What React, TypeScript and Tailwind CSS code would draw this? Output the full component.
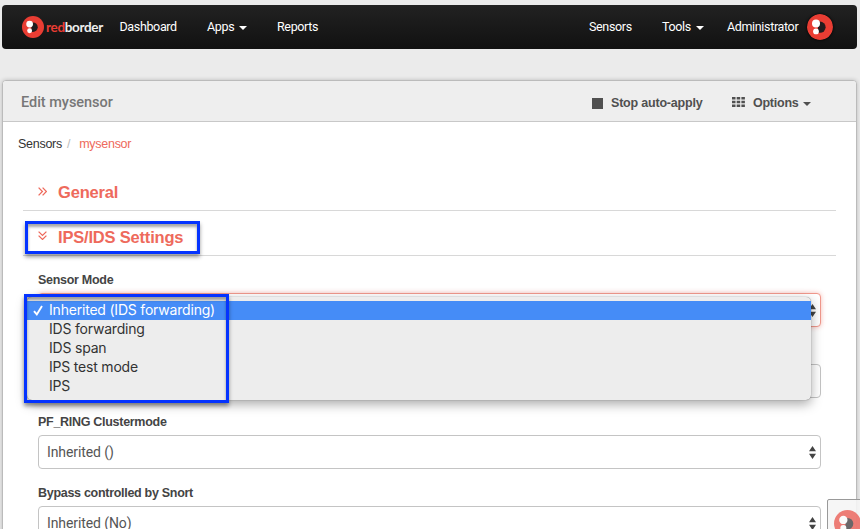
import React from 'react';

function Mark({ className }: { className: string }) {
  return (
    <svg viewBox="0 0 26 26" className={className}>
      <circle cx="13" cy="13" r="13" fill="#e93d33" />
      <path d="M11 7.6h2a5.6 5.6 0 0 1 0 11.2h-2z" fill="#211c1e" />
      <circle cx="9" cy="9.6" r="4" fill="#fff" />
      <circle cx="9" cy="17.4" r="2.9" fill="#fff" />
    </svg>
  );
}

function Caret({ className }: { className: string }) {
  return (
    <svg viewBox="0 0 8 4" className={`h-1 w-2 ${className}`}>
      <path d="M0 0h8L4 4z" fill="currentColor" />
    </svg>
  );
}

function Arrows() {
  return (
    <svg viewBox="0 0 7 13" className="h-[13px] w-[7px] shrink-0 text-[#444]">
      <path d="M0 5.2 3.5 0 7 5.2zM0 7.8h7L3.5 13z" fill="currentColor" />
    </svg>
  );
}

function Chevrons({ down }: { down?: boolean }) {
  return (
    <svg
      viewBox="0 0 9 9"
      className={`h-[9px] w-[9px] ${down ? '-mt-1 rotate-90' : '-mt-0.5'}`}
      fill="none"
      stroke="#ee6a5c"
      strokeWidth="1.3"
    >
      <path d="M.6.6 4.4 4.5.6 8.4M4.6.6l3.8 3.9-3.8 3.9" />
    </svg>
  );
}

function Section({ title, down }: { title: string; down?: boolean }) {
  return (
    <div className="flex h-[45px] items-center border-b border-[#d8d8d8] pt-2 pl-[15px]">
      <Chevrons down={down} />
      <h2 className="ml-[11px] font-['Liberation_Sans',sans-serif] text-[16.5px] font-bold tracking-[-0.19px] text-[#ee6a5c]">
        {title}
      </h2>
    </div>
  );
}

function Field({ label, value, focus, plain }: { label: string; value: string; focus?: boolean; plain?: boolean }) {
  return (
    <div className="h-[71px]">
      <div className="flex h-[26px] items-center font-['Liberation_Sans',sans-serif] text-[12.5px] font-bold tracking-[-0.29px] text-[#444]">
        {label}
      </div>
      <div
        className={`flex h-[34px] w-[783px] items-center justify-between rounded-[4px] border bg-white pr-1 pl-2 text-[14px] tracking-[-0.1px] text-[#555] ${
          focus ? 'border-[#f0988c] shadow-[0_0_5px_rgba(238,106,92,0.45)]' : 'border-[#c4c4c4]'
        }`}
      >
        <span>{value}</span>
        {!plain && <Arrows />}
      </div>
    </div>
  );
}

const modes = ['Inherited (IDS forwarding)', 'IDS forwarding', 'IDS span', 'IPS test mode', 'IPS'];

export default function App() {
  return (
    <div className="relative h-[529px] w-[860px] overflow-hidden bg-[#ebebeb] pt-[5px] pl-[2px] font-[Roboto,sans-serif]">
      <nav className="flex h-11 w-[855px] items-center rounded-[4px] bg-linear-to-b from-[#222] to-[#111] pl-5 text-[12.5px] tracking-[-0.35px] whitespace-nowrap text-white">
        <div className="flex w-[97px] items-center">
          <Mark className="h-[22px] w-[22px]" />
          <span className="ml-[2px] font-[Lato,sans-serif] text-[13.5px] leading-4 font-bold tracking-[-0.33px] text-[#eee]">
            <span className="text-[#e93d33]">red</span>border
          </span>
        </div>
        <span className="w-[88px] pl-[0.5px]">Dashboard</span>
        <span className="flex w-[70px] items-center">
          Apps <Caret className="mt-px ml-[5px]" />
        </span>
        <span className="w-[312px]">Reports</span>
        <span className="w-[73px]">Sensors</span>
        <span className="flex w-[65px] items-center">
          Tools <Caret className="mt-px ml-[5px]" />
        </span>
        <span className="w-20">Administrator</span>
        <Mark className="h-[26px] w-[26px] rounded-full shadow-[0_0_3px_#000]" />
      </nav>

      <main className="mt-[31px] h-[470px] w-[855px] rounded-t-[4px] border border-[#bbb] bg-white shadow-[0_0_4px_rgba(0,0,0,0.2)]">
        <header className="flex h-[41px] items-center rounded-t-[3px] border-b border-[#c8c8c8] bg-[#eee] pl-[18px] font-['Liberation_Sans',sans-serif] font-bold whitespace-nowrap text-[#505050]">
          <h1 className="w-[571px] pt-[3px] font-[Roboto,sans-serif] text-[14.5px] font-medium tracking-[-0.03px] text-[#777]">
            Edit mysensor
          </h1>
          <div className="flex w-[140px] items-center pt-1 text-[12.5px] tracking-[-0.2px]">
            <span className="mr-2 h-[11px] w-[11px] bg-[#505050]" />
            Stop auto-apply
          </div>
          <div className="flex items-center pt-1 text-[12.5px] tracking-[-0.25px]">
            <svg viewBox="0 0 13 10" className="-mt-0.5 mr-2 h-[10px] w-[13px]" fill="#505050">
              <path d="M0 0h3.5v2.6H0zM4.7 0h3.5v2.6H4.7zM9.4 0h3.5v2.6H9.4zM0 3.7h3.5v2.6H0zM4.7 3.7h3.5v2.6H4.7zM9.4 3.7h3.5v2.6H9.4zM0 7.4h3.5V10H0zM4.7 7.4h3.5V10H4.7zM9.4 7.4h3.5V10H9.4z" />
            </svg>
            Options
            <Caret className="mt-0.5 ml-[5px]" />
          </div>
        </header>

        <div className="flex h-11 items-center pl-[15px] font-['Liberation_Sans',sans-serif] text-[12.5px] tracking-[-0.27px] text-[#333]">
          <span>Sensors</span>
          <span className="mx-[5px] text-[#bbb]">/</span>
          <span className="ml-1 text-[#ee6a5c]">mysensor</span>
        </div>

        <div className="ml-5 w-[813px]">
          <Section title="General" />
          <Section title="IPS/IDS Settings" down />
        </div>

        <div className="mt-[11px] ml-[35px]">
          <Field label="Sensor Mode" value="" focus />
          <Field label="" value="" plain />
          <Field label="PF_RING Clustermode" value="Inherited ()" />
          <Field label="Bypass controlled by Snort" value="Inherited (No)" />
        </div>
      </main>

      <ul className="absolute top-[297px] left-[27px] h-[103px] w-[784px] rounded-[5px] bg-[#ededed] pt-1 font-[Inter,sans-serif] text-[14px] text-[#333] shadow-[0_4px_12px_rgba(0,0,0,0.35),0_0_1px_rgba(0,0,0,0.6)]">
        {modes.map((mode, i) => (
          <li key={mode} className={`flex h-[19px] items-center pb-[2px] pl-1.5 tracking-[-0.2px] ${i === 0 ? 'bg-[#458cf7] text-white' : ''}`}>
            <span className="flex w-4">
              {i === 0 && (
                <svg viewBox="0 0 10 11" className="mt-0.5 h-[11px] w-[10px]" fill="none" stroke="#fff" strokeWidth="1.9">
                  <path d="M1 6.2 3.8 9.4 9 1" />
                </svg>
              )}
            </span>
            {mode}
          </li>
        ))}
      </ul>

      <div className="absolute top-[294px] left-[24px] h-[109px] w-[205px] border-[3px] border-[#0433ff] shadow-[0_3px_4px_rgba(0,0,0,0.4),inset_0_3px_3px_rgba(0,0,0,0.35)]" />
      <div className="absolute top-[221px] left-[25px] h-[33px] w-[175px] border-[3px] border-[#0433ff] shadow-[0_3px_4px_rgba(0,0,0,0.4),inset_0_3px_3px_rgba(0,0,0,0.35)]" />

      <div className="absolute top-[499px] left-[827px] h-10 w-10 rounded-tl-[2px] border border-[#999] bg-[#f5f5f5]/90 pt-[10px] pl-[6px]">
        <Mark className="h-[27px] w-[27px] opacity-65" />
      </div>
    </div>
  );
}
